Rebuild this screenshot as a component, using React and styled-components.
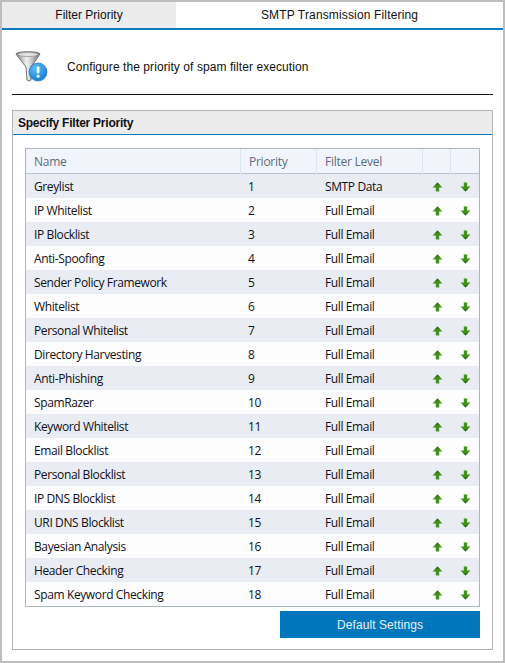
import React from "react";
import styled, { createGlobalStyle } from "styled-components";

const Global = createGlobalStyle`
  html, body { margin: 0; padding: 0; background: #fff; }
  * { box-sizing: border-box; }
`;

const Frame = styled.div`
  width: 505px;
  height: 663px;
  border: 2px solid #bdbdbd;
  background: #fff;
  display: flex;
  flex-direction: column;
  font-family: "Liberation Sans", Arial, sans-serif;
  color: #111;
  overflow: hidden;
`;

const Tabs = styled.div`
  display: flex;
  height: 28px;
  flex: none;
  border-bottom: 2px solid #0a7bbd;
`;

const Tab = styled.div`
  width: ${(p) => (p.$active ? "174px" : "327px")};
  background: ${(p) => (p.$active ? "#ebebeb" : "#fff")};
  display: flex;
  align-items: center;
  justify-content: center;
  font-size: 12px;
  letter-spacing: ${(p) => (p.$active ? "0" : "0.15px")};
`;

const Intro = styled.div`
  margin: 0 10px;
  height: 65px;
  flex: none;
  display: flex;
  align-items: flex-start;
  border-bottom: 1px solid #111;
  padding: 20px 0 0 3px;
  font-size: 12px;
  letter-spacing: 0.07px;
`;

const IntroText = styled.span`
  margin-left: 19px;
  margin-top: 10px;
`;

const Group = styled.section`
  margin: 15px 10px 0;
  height: 540px;
  flex: none;
  border: 1px solid #b2b2b2;
  display: flex;
  flex-direction: column;
`;

const GroupTitle = styled.h2`
  margin: 0;
  height: 24px;
  flex: none;
  padding-left: 5px;
  background: #ebebeb;
  border-bottom: 1px solid #0a7bbd;
  font-size: 12px;
  font-weight: bold;
  letter-spacing: -0.24px;
  line-height: 25px;
`;

const GroupBody = styled.div`
  padding: 13px 12px 0 12px;
  display: flex;
  flex-direction: column;
  align-items: flex-end;
`;

const Table = styled.div`
  width: 455px;
  height: 459px;
  border: 1px solid #aab5c6;
  display: flex;
  flex-direction: column;
  font-family: "Open Sans", "Noto Sans", sans-serif;
  font-size: 12px;
  letter-spacing: -0.38px;
`;

const columns = "215px 76px 106px 28px 28px";

const HeaderRow = styled.div`
  display: grid;
  grid-template-columns: ${columns};
  height: 25px;
  flex: none;
  background: #f1f5fb;
  border-bottom: 1px solid #b6c2d6;
  color: #5c6b80;
`;

const HeaderCell = styled.div`
  padding-left: 8px;
  line-height: 25px;
  letter-spacing: -0.25px;
  border-right: ${(p) => (p.$last ? "none" : "1px solid #dfe5ee")};
`;

const Row = styled.div`
  display: grid;
  grid-template-columns: ${columns};
  height: 24px;
  flex: none;
  background: ${(p) => (p.$odd ? "#e9ecf2" : "#fdfdfe")};
  color: #101018;
`;

const Cell = styled.div`
  padding-left: 8px;
  line-height: 25px;
  white-space: nowrap;
`;

const PriorityCell = styled(Cell)`
  padding-left: 7px;
`;

const IconCell = styled.div`
  display: flex;
  align-items: center;
  justify-content: center;
  padding-top: 1px;
`;

const Actions = styled.button`
  margin-top: 4px;
  width: 200px;
  height: 27px;
  border: none;
  background: #0076bd;
  color: #e8f3fa;
  font-family: "Liberation Sans", Arial, sans-serif;
  font-size: 12px;
  letter-spacing: 0.08px;
  padding: 0;
`;

const Arrow = ({ down }) => (
  <svg width="11" height="10" viewBox="0 0 11 10" style={down ? { transform: "scaleY(-1)" } : undefined}>
    <path d="M5.5 0.5 L10.5 5.5 L7.2 5.5 L7.2 9.5 L3.8 9.5 L3.8 5.5 L0.5 5.5 Z" fill="#44901f" />
    <path d="M5.5 0.5 L8 3 L3 3 Z" fill="#2f7a12" />
  </svg>
);

const FunnelIcon = () => (
  <svg width="33" height="34" viewBox="0 0 33 34" style={{ flex: "none" }}>
    <defs>
      <linearGradient id="fg" x1="0" x2="1" y1="0" y2="0">
        <stop offset="0" stopColor="#8a8a8a" />
        <stop offset="0.45" stopColor="#f2f2f2" />
        <stop offset="1" stopColor="#777" />
      </linearGradient>
      <radialGradient id="bg" cx="0.4" cy="0.3" r="0.8">
        <stop offset="0" stopColor="#5fc0f5" />
        <stop offset="1" stopColor="#0f75d0" />
      </radialGradient>
    </defs>
    <path d="M1 4 C1 1 24 1 25 4 L16 17 L16 30 Q14 32 12 30 L11 17 Z" fill="url(#fg)" stroke="#6e6e6e" strokeWidth="1" />
    <ellipse cx="13" cy="4.5" rx="10" ry="2" fill="#e4e4e4" stroke="#8a8a8a" strokeWidth="0.7" />
    <circle cx="23" cy="22" r="9" fill="url(#bg)" stroke="#1a6fbe" strokeWidth="0.7" />
    <rect x="21.8" y="16.5" width="2.6" height="7" rx="1" fill="#fff" />
    <circle cx="23.1" cy="26.2" r="1.5" fill="#fff" />
  </svg>
);

const data = [
  ["Greylist", "SMTP Data"],
  ["IP Whitelist"],
  ["IP Blocklist"],
  ["Anti-Spoofing"],
  ["Sender Policy Framework"],
  ["Whitelist"],
  ["Personal Whitelist"],
  ["Directory Harvesting"],
  ["Anti-Phishing"],
  ["SpamRazer"],
  ["Keyword Whitelist"],
  ["Email Blocklist"],
  ["Personal Blocklist"],
  ["IP DNS Blocklist"],
  ["URI DNS Blocklist"],
  ["Bayesian Analysis"],
  ["Header Checking"],
  ["Spam Keyword Checking"],
];

export default function App() {
  return (
    <Frame>
      <Global />
      <Tabs>
        <Tab $active>Filter Priority</Tab>
        <Tab>SMTP Transmission Filtering</Tab>
      </Tabs>
      <Intro>
        <FunnelIcon />
        <IntroText>Configure the priority of spam filter execution</IntroText>
      </Intro>
      <Group>
        <GroupTitle>Specify Filter Priority</GroupTitle>
        <GroupBody>
          <Table>
            <HeaderRow>
              <HeaderCell>Name</HeaderCell>
              <HeaderCell>Priority</HeaderCell>
              <HeaderCell>Filter Level</HeaderCell>
              <HeaderCell />
              <HeaderCell $last />
            </HeaderRow>
            {data.map(([name, level], i) => (
              <Row key={name} $odd={i % 2 === 0}>
                <Cell>{name}</Cell>
                <PriorityCell>{i + 1}</PriorityCell>
                <Cell>{level || "Full Email"}</Cell>
                <IconCell><Arrow /></IconCell>
                <IconCell><Arrow down /></IconCell>
              </Row>
            ))}
          </Table>
          <Actions>Default Settings</Actions>
        </GroupBody>
      </Group>
    </Frame>
  );
}
